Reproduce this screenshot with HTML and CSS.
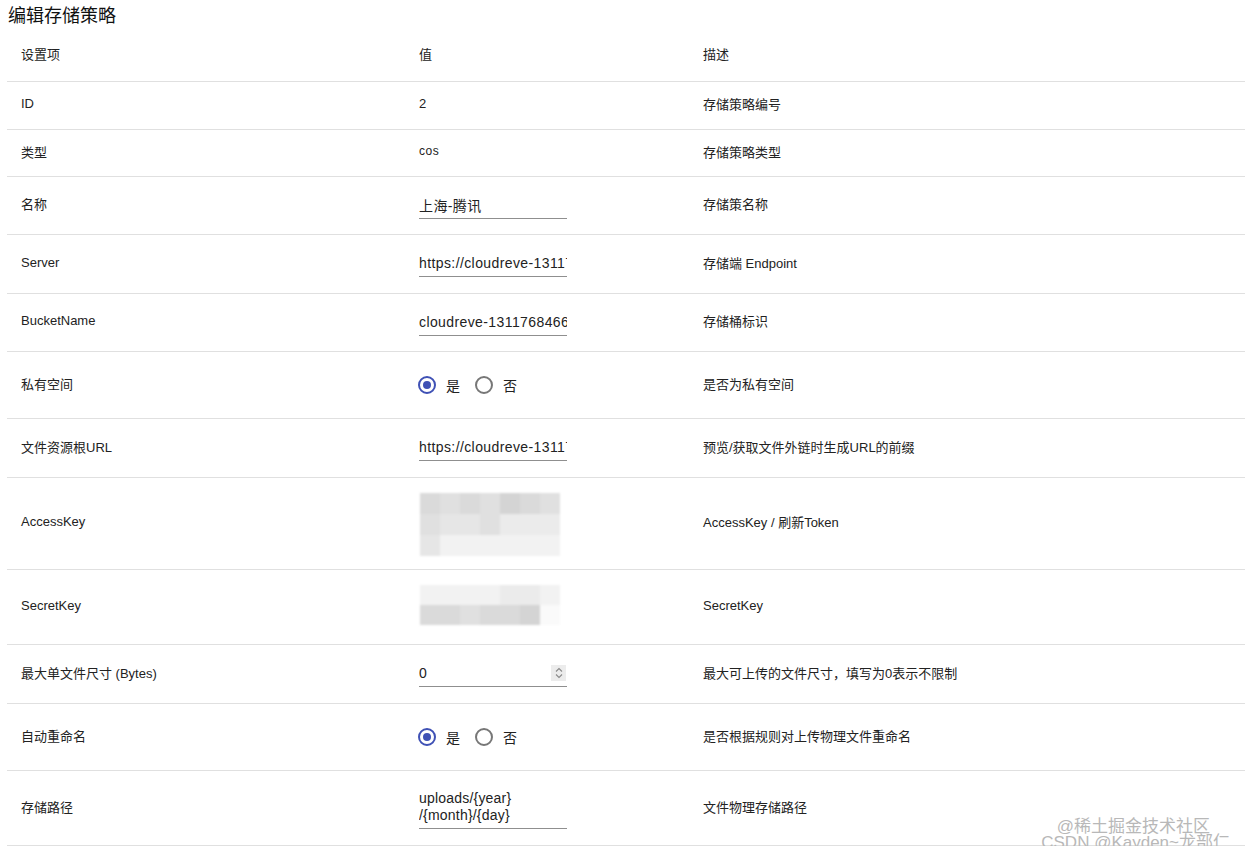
FILE: index.html
```html
<!DOCTYPE html>
<html lang="zh-CN">
<head>
    <meta charset="UTF-8">
    <title>编辑存储策略</title>
    <link rel="stylesheet" href="styles.css">
</head>
<body>
    <div class="page">
        <h2 class="page-title">编辑存储策略</h2>

        <table class="policy-table">
            <colgroup>
                <col class="col-name">
                <col class="col-value">
                <col class="col-desc">
            </colgroup>
            <thead>
                <tr class="row-head">
                    <th>设置项</th>
                    <th>值</th>
                    <th>描述</th>
                </tr>
            </thead>
            <tbody>
                <tr class="row-plain">
                    <td>ID</td>
                    <td>2</td>
                    <td>存储策略编号</td>
                </tr>
                <tr class="row-plain short">
                    <td>类型</td>
                    <td class="mono-ish">cos</td>
                    <td>存储策略类型</td>
                </tr>
                <tr class="row-input">
                    <td>名称</td>
                    <td><div class="field"><input type="text" value="上海-腾讯"></div></td>
                    <td>存储策名称</td>
                </tr>
                <tr class="row-input tall">
                    <td>Server</td>
                    <td><div class="field"><input type="text" value="https://cloudreve-1311768466.cos.ap-shanghai.myqcloud.com"></div></td>
                    <td>存储端 Endpoint</td>
                </tr>
                <tr class="row-input">
                    <td>BucketName</td>
                    <td><div class="field"><input type="text" value="cloudreve-1311768466"></div></td>
                    <td>存储桶标识</td>
                </tr>
                <tr class="row-radio">
                    <td>私有空间</td>
                    <td>
                        <div class="radio-group">
                            <span class="radio checked"></span><span class="radio-label">是</span>
                            <span class="radio"></span><span class="radio-label">否</span>
                        </div>
                    </td>
                    <td>是否为私有空间</td>
                </tr>
                <tr class="row-input tall">
                    <td>文件资源根URL</td>
                    <td><div class="field"><input type="text" value="https://cloudreve-1311768466.cos.ap-shanghai.myqcloud.com"></div></td>
                    <td>预览/获取文件外链时生成URL的前缀</td>
                </tr>
                <tr class="row-access">
                    <td>AccessKey</td>
                    <td>
                        <div class="blurred blur-access">
                            <span class="px g2"></span><span class="px g3"></span><span class="px g2"></span><span class="px g3"></span><span class="px g1"></span><span class="px g2"></span><span class="px g3"></span>
                            <span class="px g3"></span><span class="px g4"></span><span class="px g4"></span><span class="px g3"></span><span class="px g5"></span><span class="px g5"></span><span class="px g5"></span>
                            <span class="px g4"></span><span class="px g6"></span><span class="px g6"></span><span class="px g6"></span><span class="px g6"></span><span class="px g6"></span><span class="px g6"></span>
                        </div>
                    </td>
                    <td>AccessKey / 刷新Token</td>
                </tr>
                <tr class="row-secret">
                    <td>SecretKey</td>
                    <td>
                        <div class="blurred blur-secret">
                            <span class="px g6"></span><span class="px g6"></span><span class="px g6"></span><span class="px g6"></span><span class="px g5"></span><span class="px g5"></span><span class="px g6"></span>
                            <span class="px g2"></span><span class="px g2"></span><span class="px g3"></span><span class="px g2"></span><span class="px g2"></span><span class="px g1"></span><span class="px g7"></span>
                        </div>
                    </td>
                    <td>SecretKey</td>
                </tr>
                <tr class="row-input tall">
                    <td>最大单文件尺寸 (Bytes)</td>
                    <td>
                        <div class="field number-field">
                            <input type="text" value="0">
                            <span class="spinner">
                                <svg width="10" height="14" viewBox="0 0 10 14"><path d="M2 5.5 L5 2.5 L8 5.5 M2 8.5 L5 11.5 L8 8.5" fill="none" stroke="#8a8a8a" stroke-width="1.1"/></svg>
                            </span>
                        </div>
                    </td>
                    <td>最大可上传的文件尺寸，填写为0表示不限制</td>
                </tr>
                <tr class="row-radio">
                    <td>自动重命名</td>
                    <td>
                        <div class="radio-group">
                            <span class="radio checked"></span><span class="radio-label">是</span>
                            <span class="radio"></span><span class="radio-label">否</span>
                        </div>
                    </td>
                    <td>是否根据规则对上传物理文件重命名</td>
                </tr>
                <tr class="row-path">
                    <td>存储路径</td>
                    <td><div class="field"><textarea rows="2">uploads/{year}
/{month}/{day}</textarea></div></td>
                    <td>文件物理存储路径</td>
                </tr>
            </tbody>
        </table>

        <div class="watermark">
            <span class="wm-top">@稀土掘金技术社区</span>
            <span class="wm-bottom">CSDN @Kayden~龙部仁</span>
        </div>
    </div>
</body>
</html>
```

FILE: styles.css
```css
:root {
    --text-color: #222;
    --border-color: #e0e0e0;
    --primary-color: #3f51b5;
    --underline-color: #8f8f8f;
}

body {
    margin: 0;
    padding: 0;
    background-color: white;
    color: var(--text-color);
    font-family: 'Liberation Sans', 'Noto Sans CJK SC', sans-serif;
    font-size: 13px;
}

.page {
    position: relative;
    padding: 0 1px 0 7px;
}

.page-title {
    margin: 0;
    padding-left: 1px;
    height: 30px;
    line-height: 32px;
    font-size: 18px;
    font-weight: normal;
    color: #111;
}

.policy-table {
    width: 1238px;
    border-collapse: collapse;
    table-layout: fixed;
}

.col-name { width: 398px; }
.col-value { width: 284px; }
.col-desc { width: 556px; }

.policy-table th,
.policy-table td {
    padding: 0 0 0 14px;
    text-align: left;
    vertical-align: middle;
    font-weight: normal;
    border-bottom: 1px solid var(--border-color);
}

.row-head { height: 51px; }
.row-head th { padding-bottom: 3px; }
.row-plain { height: 48px; }
.row-plain.short { height: 47px; }
.row-input { height: 58px; }
.row-input.tall { height: 59px; }
.row-radio { height: 67px; }
.row-access { height: 92px; }
.row-secret { height: 75px; }
.row-path { height: 75px; }

.row-plain td,
.row-input td,
.row-radio td,
.row-access td,
.row-secret td,
.row-path td {
    padding-bottom: 3px;
}

.mono-ish {
    letter-spacing: 0.6px;
    font-size: 12px;
}

.field {
    width: 148px;
    border-bottom: 1px solid var(--underline-color);
    display: flex;
    align-items: center;
    margin-top: 2px;
}

.field input,
.field textarea {
    width: 100%;
    border: none;
    outline: none;
    padding: 6px 0 5px;
    margin: 0;
    font-family: inherit;
    font-size: 14px;
    letter-spacing: 0.4px;
    color: var(--text-color);
    background: transparent;
    overflow: hidden;
    white-space: nowrap;
}

.field textarea {
    resize: none;
    white-space: pre;
    line-height: 17px;
    height: 34px;
    padding: 4px 0 4px;
    letter-spacing: 0.2px;
}

.number-field input {
    flex: 1;
}

.spinner {
    display: flex;
    align-items: center;
    justify-content: center;
    width: 15px;
    height: 16px;
    background-color: #ececec;
    margin-right: 1px;
}

.radio-group {
    display: flex;
    align-items: center;
    margin-left: -1px;
    margin-top: 3px;
}

.radio {
    width: 14px;
    height: 14px;
    border: 2px solid #777;
    border-radius: 50%;
    position: relative;
    flex-shrink: 0;
}

.radio.checked {
    border-color: var(--primary-color);
}

.radio.checked::after {
    content: '';
    position: absolute;
    left: 3px;
    top: 3px;
    width: 8px;
    height: 8px;
    border-radius: 50%;
    background-color: var(--primary-color);
}

.radio-label {
    font-size: 14px;
    margin: 0 15px 0 10px;
}

.blurred {
    display: grid;
    grid-template-columns: repeat(7, 20px);
    grid-auto-rows: 20px;
    filter: blur(1.2px);
    margin-left: 1px;
}

.blur-access {
    grid-auto-rows: 21px;
    margin-top: 5px;
}

.blur-secret {
    margin-top: 0;
}

.px { display: block; }
.g1 { background-color: #d4d4d4; }
.g2 { background-color: #dadada; }
.g3 { background-color: #e0e0e0; }
.g4 { background-color: #e6e6e6; }
.g5 { background-color: #ebebeb; }
.g6 { background-color: #f2f2f2; }
.g7 { background-color: #fafafa; }

.watermark {
    position: absolute;
    right: 16px;
    top: 819px;
    display: flex;
    flex-direction: column;
    align-items: flex-end;
    font-size: 17px;
    line-height: 16px;
    color: #b8b8b8;
    pointer-events: none;
}

.wm-top {
    margin-right: 20px;
}
```
